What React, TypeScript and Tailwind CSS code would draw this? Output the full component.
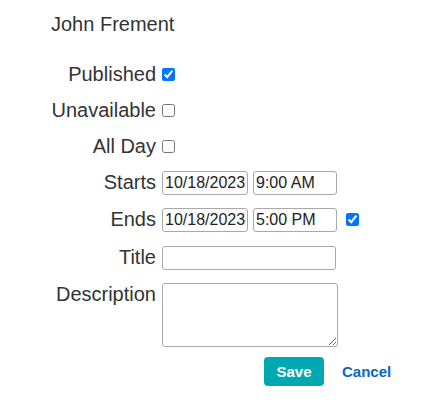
import React from 'react';

const labelCls = 'w-[162px] shrink-0 pr-[6px] text-right';
const inputCls = 'h-[24px] rounded-[3px] border border-[#a9a9a9] bg-white px-[2px] text-[16px] text-[#222] outline-none';

function Row({ label, className = '', children }: { label: string; className?: string; children?: React.ReactNode }) {
  return (
    <div className={`flex items-center ${className}`}>
      <div className={labelCls}>{label}</div>
      <div className="flex items-center">{children}</div>
    </div>
  );
}

export default function App() {
  return (
    <div className="w-[435px] h-[407px] bg-white text-[20px] leading-[23px] text-[#333] font-['Liberation_Sans',Arial,sans-serif]">
      <div className="pl-[51px] pt-[13px] h-[56px]">John Frement</div>

      <Row label="Published" className="h-[36px]">
        <input type="checkbox" defaultChecked className="h-[13px] w-[13px]" />
      </Row>
      <Row label="Unavailable" className="h-[36px]">
        <input type="checkbox" className="h-[13px] w-[13px]" />
      </Row>
      <Row label="All Day" className="h-[36px]">
        <input type="checkbox" className="h-[13px] w-[13px]" />
      </Row>
      <Row label="Starts" className="h-[37px]">
        <input className={`${inputCls} w-[86px]`} defaultValue="10/18/2023" />
        <input className={`${inputCls} ml-[5px] w-[84px]`} defaultValue="9:00 AM" />
      </Row>
      <Row label="Ends" className="h-[37px]">
        <input className={`${inputCls} w-[86px]`} defaultValue="10/18/2023" />
        <input className={`${inputCls} ml-[5px] w-[84px]`} defaultValue="5:00 PM" />
        <input type="checkbox" defaultChecked className="ml-[9px] h-[13px] w-[13px]" />
      </Row>
      <Row label="Title" className="h-[39px]">
        <input className={`${inputCls} w-[174px]`} />
      </Row>

      <div className="flex items-start pt-[6px]">
        <div className={labelCls}>Description</div>
        <textarea className="h-[64px] w-[176px] resize rounded-[3px] border border-[#a9a9a9] bg-white text-[14px] outline-none" />
      </div>

      <div className="flex items-center pl-[264px] pt-[10px]">
        <button className="h-[29px] w-[60px] rounded-[4px] bg-[#00a9b1] text-[15px] font-bold text-white">Save</button>
        <button className="ml-[18px] text-[15px] font-bold text-[#0b66c3]">Cancel</button>
      </div>
    </div>
  );
}
